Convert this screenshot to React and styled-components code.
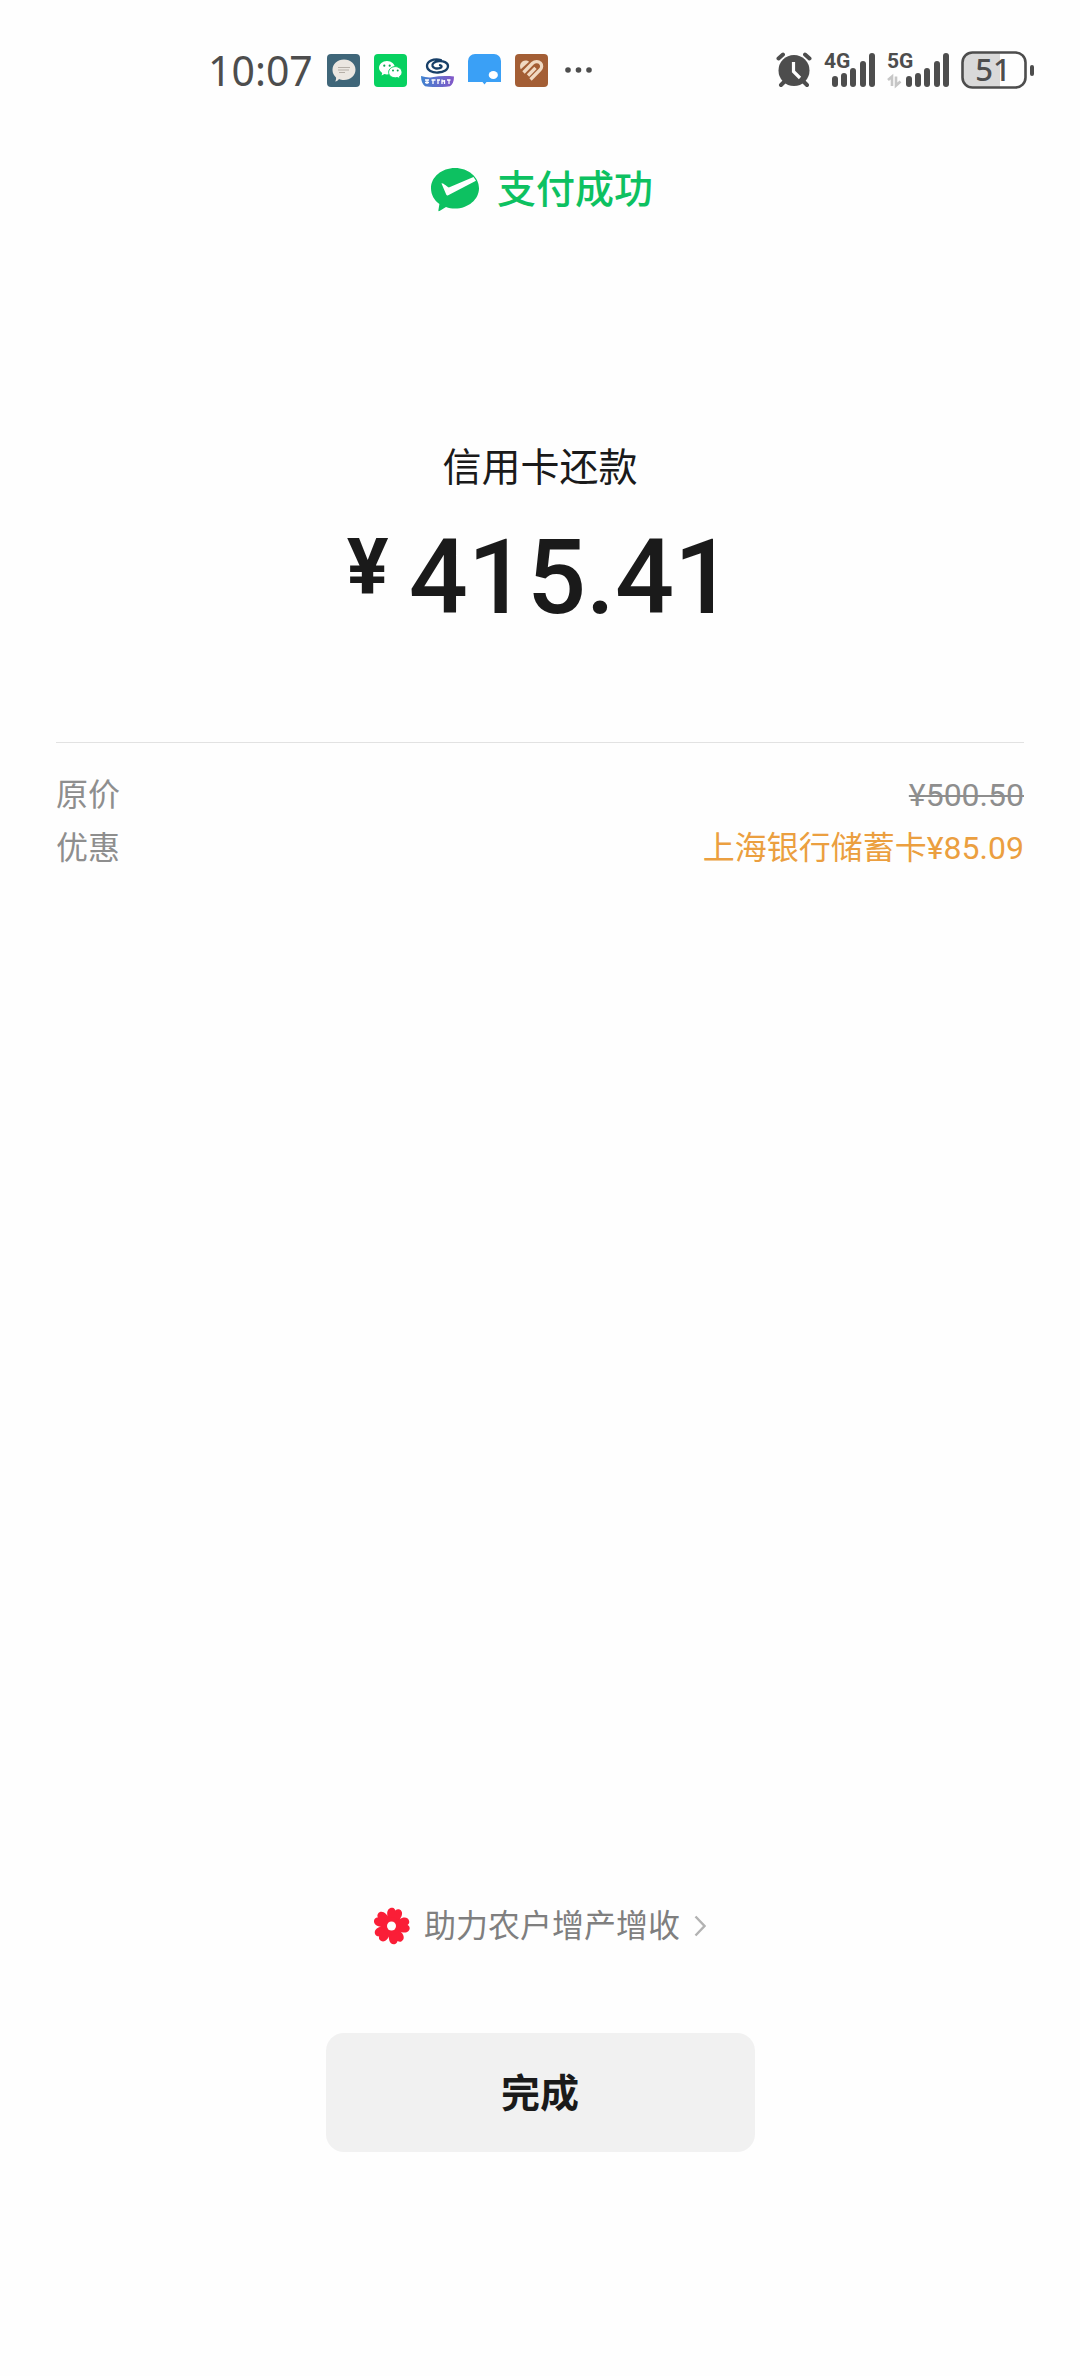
import React from 'react';
import styled, { createGlobalStyle } from 'styled-components';

const GlobalStyle = createGlobalStyle`
  *,
  *::before,
  *::after {
    box-sizing: border-box;
  }

  body {
    margin: 0;
    background: #fefefe;
    color: #1a1a1a;
    font-family: Roboto, 'Noto Sans CJK SC', sans-serif;
    font-size: 32px;
  }
`;

const Page = styled.div`
  display: flex;
  flex-direction: column;
  min-height: 100vh;
`;

const StatusBar = styled.div`
  display: flex;
  align-items: center;
  justify-content: space-between;
  height: 140px;
  padding: 0 46px 0 208px;
  color: #4d4d4d;

  svg {
    display: block;
    flex: none;
  }
`;

const StatusGroup = styled.div`
  display: flex;
  align-items: center;
  gap: ${({ $gap }) => $gap}px;
`;

const Clock = styled.time`
  font-family: 'Noto Sans', sans-serif;
  font-size: 41px;
  line-height: 48px;
`;

const NetworkLabel = styled.text`
  font-family: Roboto, sans-serif;
  font-size: 21px;
  font-weight: 700;
  fill: currentColor;
`;

const BatteryLabel = styled.text`
  font-family: 'Noto Sans', sans-serif;
  font-size: 31px;
  font-weight: 500;
  fill: currentColor;
`;

const ResultHeader = styled.header`
  display: flex;
  align-items: center;
  justify-content: center;
  gap: 18px;
  margin-top: 22px;
  padding-left: 4px;
  color: #0dc161;
`;

const ResultTitle = styled.h1`
  margin: 0;
  font-size: 39px;
  font-weight: 500;
  line-height: 56px;
`;

const Summary = styled.section`
  display: flex;
  flex-direction: column;
  align-items: center;
  padding: 222px 56px 0;
`;

const Payee = styled.h2`
  margin: 0;
  font-size: 39px;
  font-weight: 400;
  line-height: 56px;
`;

const Amount = styled.p`
  display: flex;
  align-items: flex-start;
  gap: 20px;
  margin: 26px 0 0;
  font-size: 104px;
  font-weight: 500;
  line-height: 112px;
`;

const Currency = styled.span`
  font-size: 78px;
  font-weight: 700;
  line-height: 92px;
`;

const Details = styled.dl`
  margin: 108px 56px 0;
  padding-top: 26px;
  border-top: 1px solid #e2e2e2;
`;

const DetailRow = styled.div`
  display: flex;
  justify-content: space-between;
  line-height: 53px;
  color: #8e8e8e;
`;

const Label = styled.dt`
  margin: 0;
`;

const Value = styled.dd`
  margin: 0;
  color: ${({ $discount }) => ($discount ? '#eb9f40' : 'inherit')};

  del {
    text-decoration-thickness: 2px;
  }
`;

const Footer = styled.footer`
  display: flex;
  flex-direction: column;
  align-items: center;
  gap: 82px;
  margin-top: auto;
  padding-bottom: 224px;
`;

const CharityLink = styled.a`
  display: flex;
  align-items: center;
  gap: 14px;
  color: #7f7f7f;
  line-height: 50px;
  text-decoration: none;
`;

const DoneButton = styled.button`
  width: 40%;
  max-width: 429px;
  min-width: 200px;
  padding: 33px 0 30px;
  border: 0;
  border-radius: 18px;
  background: #f1f1f1;
  color: #1a1a1a;
  font: inherit;
  font-size: 39px;
  font-weight: 700;
  line-height: 56px;
`;

const signalBars = [
  { x: 0, y: 23 },
  { x: 9, y: 20 },
  { x: 18, y: 15 },
  { x: 28, y: 8 },
  { x: 37, y: 0 },
];

function MessageIcon() {
  return (
    <svg width="33" height="33" viewBox="0 0 33 33" aria-hidden="true">
      <rect width="33" height="33" rx="4" fill="#3f6679" />
      <path
        d="M17 5.500c6.500 0 11.500 4.400 11.500 10.200S23.500 26 17 26c-2 0-3.600-.3-5-1-1 1.400-2.200 2.200-3.800 2.400.8-1.400 1-2.600.8-4C6.800 21.500 5.500 19 5.500 16 5.500 10 10.500 5.500 17 5.500z"
        fill="#ebe7e1"
      />
      <path
        d="M11 13.500h12M11 16h11M12 18.500h6"
        stroke="#b5afa7"
        strokeWidth="1"
      />
    </svg>
  );
}

function WeChatIcon() {
  return (
    <svg width="33" height="33" viewBox="0 0 33 33" aria-hidden="true">
      <rect width="33" height="33" rx="4" fill="#07d160" />
      <path
        d="M13 7c4.400 0 8 3 8 6.800 0 3.700-3.600 6.600-8 6.600-.9 0-1.800-.1-2.600-.4L7.600 21.500l.6-2.600C6.200 17.600 5 15.800 5 13.800 5 10 8.600 7 13 7z"
        fill="#fff"
      />
      <path
        d="M21.300 12.600c3.700 0 6.700 2.500 6.700 5.700 0 1.700-1 3.200-2.500 4.300l.5 2.200-2.400-1.300c-.7.200-1.500.3-2.300.3-3.700 0-6.700-2.400-6.700-5.500s3-5.700 6.700-5.700z"
        fill="#fff"
        stroke="#07d160"
        strokeWidth="1"
      />
      <g fill="#07a850">
        <circle cx="10.300" cy="11.700" r="1.100" />
        <circle cx="15.700" cy="11.700" r="1.100" />
        <circle cx="19" cy="16.600" r="1" />
        <circle cx="23.700" cy="16.600" r="1" />
      </g>
    </svg>
  );
}

function BankIcon() {
  return (
    <svg width="33" height="33" viewBox="0 0 33 33" aria-hidden="true">
      <defs>
        <linearGradient id="ribbon">
          <stop offset="0" stopColor="#3f83cf" />
          <stop offset="1" stopColor="#8357c8" />
        </linearGradient>
      </defs>
      <path
        d="M20 6C12 4.200 6 7.500 6 12c0 4.300 5 6.800 11 6.500 6-.3 10.200-3 10-6.600-.2-3.500-4.600-5-9-4.700-4.600.3-7.300 2.600-6.500 5 .8 2.300 4.500 2.700 7.300 1.900 2.300-.7 2.500-2.500.2-2.900"
        fill="none"
        stroke="#173f68"
        strokeWidth="2.300"
        strokeLinecap="round"
      />
      <path
        d="M0 22c4 1.300 8 1.800 11 1.200 7-1.200 14-1.400 22-.7 0 5-1.500 8.200-4 9.700-7 1.200-18 1.200-25 0C1.500 30.500 0 27 0 22z"
        fill="url(#ribbon)"
      />
      <path
        d="M4 26h4M4 28.500h4M6 25.500v4.500M10.500 26h4M12 26v4M16 26h3M17 26v4M21 25.500v4.500M21 27h3M23.500 26v4M26 26h3.500M28 26v4"
        stroke="#fff"
        strokeWidth="1.300"
      />
    </svg>
  );
}

function BubbleIcon() {
  return (
    <svg width="33" height="33" viewBox="0 0 33 33" aria-hidden="true">
      <path
        d="M7 0h19a7 7 0 0 1 7 7v21H18.500L16.500 30.500 14.500 28H0V7a7 7 0 0 1 7-7z"
        fill="#3aa0f6"
      />
      <ellipse cx="25.300" cy="21" rx="4.600" ry="4" fill="#fff" />
    </svg>
  );
}

function HeartIcon() {
  return (
    <svg width="33" height="33" viewBox="0 0 33 33" aria-hidden="true">
      <rect width="33" height="33" rx="4" fill="#a35e35" />
      <path
        d="M5.800 15.300C3.500 11 6.500 6.500 10.500 6.500c1.500 0 2.700.5 3.600 1.300z"
        fill="#f0d9c2"
      />
      <path
        d="M8.500 18.500L17.500 9.300c2.500-2.300 6-2.300 7.800-.3 1.900 2 1.700 4.800-.3 6.900L15.500 25.500M13 21.500l7.500-7.700"
        fill="none"
        stroke="#f0d9c2"
        strokeWidth="3.300"
      />
    </svg>
  );
}

function MoreIcon() {
  return (
    <svg width="33" height="33" viewBox="0 0 33 33" aria-hidden="true">
      <g fill="#4d4d4d">
        <circle cx="6" cy="16" r="2.800" />
        <circle cx="16.500" cy="16" r="2.800" />
        <circle cx="27" cy="16" r="2.800" />
      </g>
    </svg>
  );
}

function AlarmIcon() {
  return (
    <svg width="36" height="36" viewBox="0 0 36 36" aria-hidden="true">
      <g stroke="#4d4d4d" strokeWidth="4" strokeLinecap="round">
        <path d="M2.500 6.500L7 2.500M33.500 6.500L29 2.500M9 29l-4 4M27 29l4 4" />
      </g>
      <circle cx="18" cy="18.500" r="15.500" fill="#4d4d4d" />
      <path
        d="M17.500 10v9.500L24 26"
        fill="none"
        stroke="#fefefe"
        strokeWidth="3.200"
      />
    </svg>
  );
}

function SignalIcon({ label, offset, arrows }) {
  return (
    <svg
      width={offset + 43}
      height="52"
      viewBox={`0 -8 ${offset + 43} 52`}
      role="img"
      aria-label={label}
    >
      <NetworkLabel x="0" y="16">
        {label}
      </NetworkLabel>
      {arrows && (
        <path
          d="M1 28l4-3.500V34M9 24.500v9l4.500-4"
          fill="none"
          stroke="#c6c6c6"
          strokeWidth="2.600"
        />
      )}
      {signalBars.map(({ x, y }) => (
        <rect
          key={x}
          x={offset + x}
          y={y + 1}
          width="6"
          height={34 - y}
          rx="3"
          fill="#4d4d4d"
        />
      ))}
    </svg>
  );
}

function BatteryIcon() {
  return (
    <svg
      width="73"
      height="54"
      viewBox="0 -8 73 54"
      role="img"
      aria-label="51%"
    >
      <path d="M12 2h27v34H12A10 10 0 0 1 2 26V12A10 10 0 0 1 12 2z" fill="#d9d9d9" />
      <rect
        x="1.500"
        y="1.500"
        width="63"
        height="35"
        rx="10"
        fill="none"
        stroke="#4d4d4d"
        strokeWidth="2.600"
      />
      <rect x="69" y="14" width="4" height="11" rx="2" fill="#4d4d4d" />
      <BatteryLabel x="32" y="30" textAnchor="middle">
        51
      </BatteryLabel>
    </svg>
  );
}

function SuccessIcon() {
  return (
    <svg width="48" height="44" viewBox="0 0 48 44" aria-hidden="true">
      <path
        d="M24 0c13.200 0 24 9 24 20.200S37.200 40.500 24 40.500c-3.200 0-6.300-.5-9-1.500L8.500 43c-.8.400-1.300 0-1.100-.8l1-6.200C3.200 32.300 0 26.600 0 20.200 0 9 10.800 0 24 0z"
        fill="#0dc161"
      />
      <path
        d="M10.500 15.500c1.500-1 5.200 3.300 7.300 3.900L42.500 9l2.500 3.800L17.200 27.300c-.8.400-1.500.1-1.900-.6z"
        fill="#fefefe"
      />
    </svg>
  );
}

function FlowerIcon() {
  return (
    <svg width="36" height="38" viewBox="0 0 36 38" aria-hidden="true">
      <g fill="#fa1e37">
        {[14, 86, 158, 230, 302].map((angle) => (
          <path
            key={angle}
            transform={`rotate(${angle} 17.500 19)`}
            d="M13.500 18L10.300 8C9.300 4 11.200 1.200 14.200 1c1.400-.1 2.500.7 3.300 1.900C18.300 1.700 19.400.9 20.800 1c3 .2 4.900 3 3.900 7L21.500 18z"
          />
        ))}
        <circle cx="17.500" cy="19" r="9" />
      </g>
      <circle cx="17.500" cy="19" r="4.500" fill="#fefefe" />
    </svg>
  );
}

function ChevronIcon() {
  return (
    <svg width="12" height="22" viewBox="0 0 12 22" aria-hidden="true">
      <path
        d="M1.500 1.500L10.500 11l-9 9.500"
        fill="none"
        stroke="#b2b2b2"
        strokeWidth="2.400"
      />
    </svg>
  );
}

export default function App() {
  return (
    <>
      <GlobalStyle />
      <Page>
        <StatusBar>
          <StatusGroup $gap={14}>
            <Clock>10:07</Clock>
            <MessageIcon />
            <WeChatIcon />
            <BankIcon />
            <BubbleIcon />
            <HeartIcon />
            <MoreIcon />
          </StatusGroup>
          <StatusGroup $gap={12}>
            <AlarmIcon />
            <SignalIcon label="4G" offset={8} />
            <SignalIcon label="5G" offset={19} arrows />
            <BatteryIcon />
          </StatusGroup>
        </StatusBar>
        <ResultHeader>
          <SuccessIcon />
          <ResultTitle>支付成功</ResultTitle>
        </ResultHeader>
        <main>
          <Summary>
            <Payee>信用卡还款</Payee>
            <Amount>
              <Currency>¥</Currency>
              <span>415.41</span>
            </Amount>
          </Summary>
          <Details>
            <DetailRow>
              <Label>原价</Label>
              <Value>
                <del>¥500.50</del>
              </Value>
            </DetailRow>
            <DetailRow>
              <Label>优惠</Label>
              <Value $discount>上海银行储蓄卡¥85.09</Value>
            </DetailRow>
          </Details>
        </main>
        <Footer>
          <CharityLink href="#charity">
            <FlowerIcon />
            <span>助力农户增产增收</span>
            <ChevronIcon />
          </CharityLink>
          <DoneButton type="button">完成</DoneButton>
        </Footer>
      </Page>
    </>
  );
}
